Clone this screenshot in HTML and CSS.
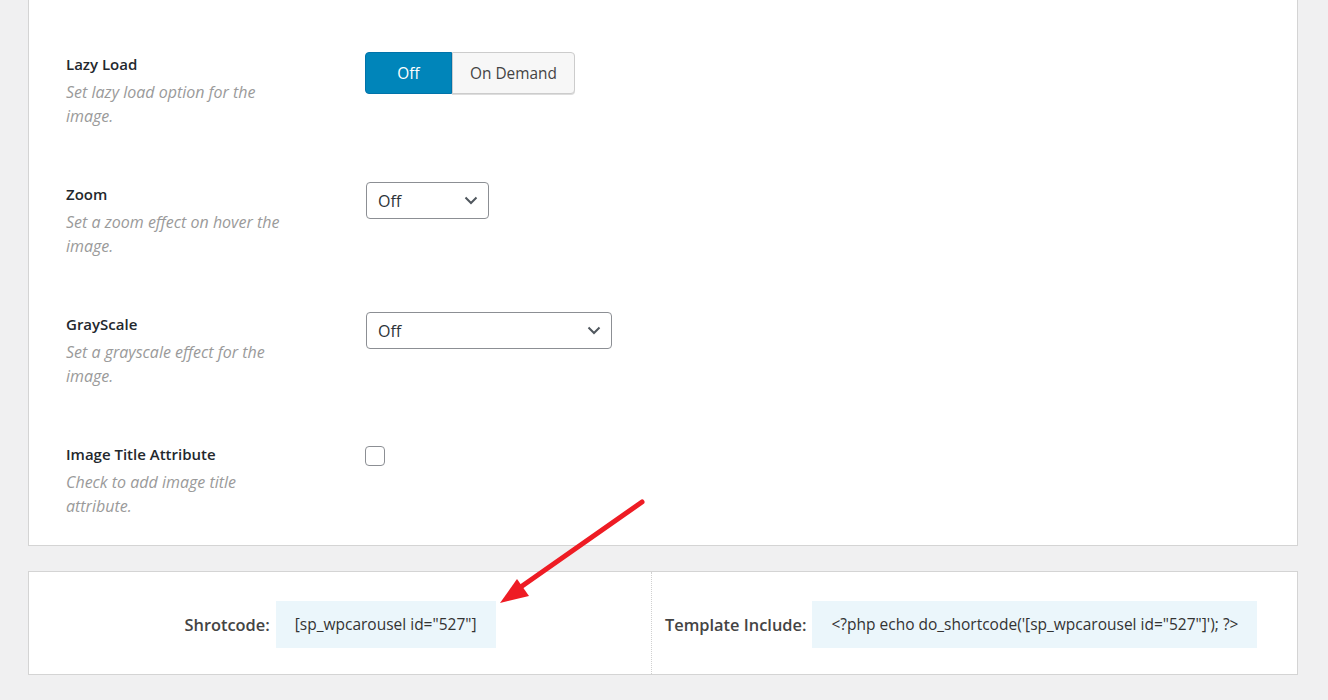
FILE: index.html
```html
<!DOCTYPE html>
<html lang="en">
<head>
  <meta charset="UTF-8">
  <meta name="viewport" content="width=device-width, initial-scale=1.0">
  <title>Carousel Settings</title>
  <link rel="stylesheet" href="styles.css">
</head>
<body>
  <div class="wrap">
    <section class="panel">
      <div class="field">
        <div class="field-title">
          <h4>Lazy Load</h4>
          <p>Set lazy load option for the image.</p>
        </div>
        <div class="field-control">
          <div class="button-set">
            <button class="active">Off</button>
            <button>On Demand</button>
          </div>
        </div>
      </div>

      <div class="field">
        <div class="field-title">
          <h4>Zoom</h4>
          <p>Set a zoom effect on hover the image.</p>
        </div>
        <div class="field-control">
          <div class="select select-sm">
            <span>Off</span>
            <svg width="14" height="9" viewBox="0 0 14 9"><path d="M1.5 1.5 L7 7 L12.5 1.5" fill="none" stroke="#50575e" stroke-width="2"/></svg>
          </div>
        </div>
      </div>

      <div class="field">
        <div class="field-title">
          <h4>GrayScale</h4>
          <p>Set a grayscale effect for the image.</p>
        </div>
        <div class="field-control">
          <div class="select select-lg">
            <span>Off</span>
            <svg width="14" height="9" viewBox="0 0 14 9"><path d="M1.5 1.5 L7 7 L12.5 1.5" fill="none" stroke="#50575e" stroke-width="2"/></svg>
          </div>
        </div>
      </div>

      <div class="field field-last">
        <div class="field-title">
          <h4>Image Title Attribute</h4>
          <p>Check to add image title attribute.</p>
        </div>
        <div class="field-control">
          <span class="checkbox"></span>
        </div>
      </div>
    </section>

    <section class="shortcode-box">
      <div class="shortcode-cell">
        <span class="sc-label">Shrotcode:</span>
        <span class="sc-code">[sp_wpcarousel id="527"]</span>
      </div>
      <div class="shortcode-cell">
        <span class="sc-label">Template Include:</span>
        <span class="sc-code">&lt;?php echo do_shortcode('[sp_wpcarousel id="527"]'); ?&gt;</span>
      </div>
    </section>
  </div>

  <!-- pointer arrow -->
  <svg class="arrow" width="1328" height="700" viewBox="0 0 1328 700">
    <line x1="642" y1="502" x2="515" y2="591" stroke="#ee1c24" stroke-width="5" stroke-linecap="round"/>
    <polygon points="500,603 517,579 529,596" fill="#ee1c24"/>
  </svg>
</body>
</html>
```

FILE: styles.css
```css
* {
  box-sizing: border-box;
}

body {
  margin: 0;
  font-family: 'Open Sans', 'Noto Sans', sans-serif;
  background: #f0f0f1;
  color: #1d2327;
}

.wrap {
  padding: 0 30px 0 28px;
}

.panel {
  background: #fff;
  border: 1px solid #d4d4d4;
  border-top: none;
  padding: 42px 0 0 37px;
}

.field {
  display: flex;
  height: 130px;
  padding-top: 10px;
}

.field-last {
  height: 113px;
}

.field-title {
  width: 299px;
  flex-shrink: 0;
  padding-top: 2px;
}

.field-title h4 {
  margin: 0;
  font-size: 15px;
  font-weight: 600;
  line-height: 20px;
  color: #23282d;
}

.field-title p {
  margin: 6px 0 0;
  width: 232px;
  font-size: 16px;
  font-style: italic;
  line-height: 24px;
  color: #9a9a9a;
}

.button-set {
  display: flex;
  height: 42px;
}

.button-set button {
  font-family: inherit;
  font-size: 15.4px;
  border: 1px solid #ccc;
  background: #f7f7f7;
  color: #444;
  padding: 0 17px;
  cursor: pointer;
  border-radius: 0 4px 4px 0;
  box-shadow: 0 1px 0 #ddd;
}

.button-set button.active {
  background: #0085ba;
  border-color: #0073aa;
  color: #fff;
  width: 87px;
  border-radius: 4px 0 0 4px;
  box-shadow: none;
}

.select {
  display: flex;
  align-items: center;
  justify-content: space-between;
  height: 37px;
  border: 1px solid #8c8f94;
  border-radius: 4px;
  padding: 0 10px 0 11px;
  margin-left: 1px;
  font-size: 16px;
  color: #2c3338;
  background: #fff;
}

.select-sm {
  width: 123px;
}

.select-lg {
  width: 246px;
}

.checkbox {
  display: block;
  width: 20px;
  height: 20px;
  margin-top: 4px;
  border: 1px solid #8c8f94;
  border-radius: 4px;
  background: #fff;
}

.shortcode-box {
  display: flex;
  margin-top: 25px;
  height: 104px;
  background: #fff;
  border: 1px solid #d4d4d4;
}

.shortcode-cell {
  flex: 1;
  display: flex;
  align-items: center;
  justify-content: center;
  padding-top: 2px;
}

.shortcode-cell + .shortcode-cell {
  border-left: 1px dotted #d0d0d0;
  justify-content: flex-start;
  padding-left: 13px;
}

.shortcode-cell:first-child {
  flex: 0 0 622px;
}

.sc-label {
  font-size: 16.4px;
  font-weight: 600;
  color: #444;
  margin-right: 6px;
}

.sc-code {
  display: inline-block;
  background: #ebf6fb;
  color: #333;
  font-size: 15.5px;
  line-height: 47px;
  padding: 0 19px;
}

.arrow {
  position: absolute;
  top: 0;
  left: 0;
  pointer-events: none;
}
```
